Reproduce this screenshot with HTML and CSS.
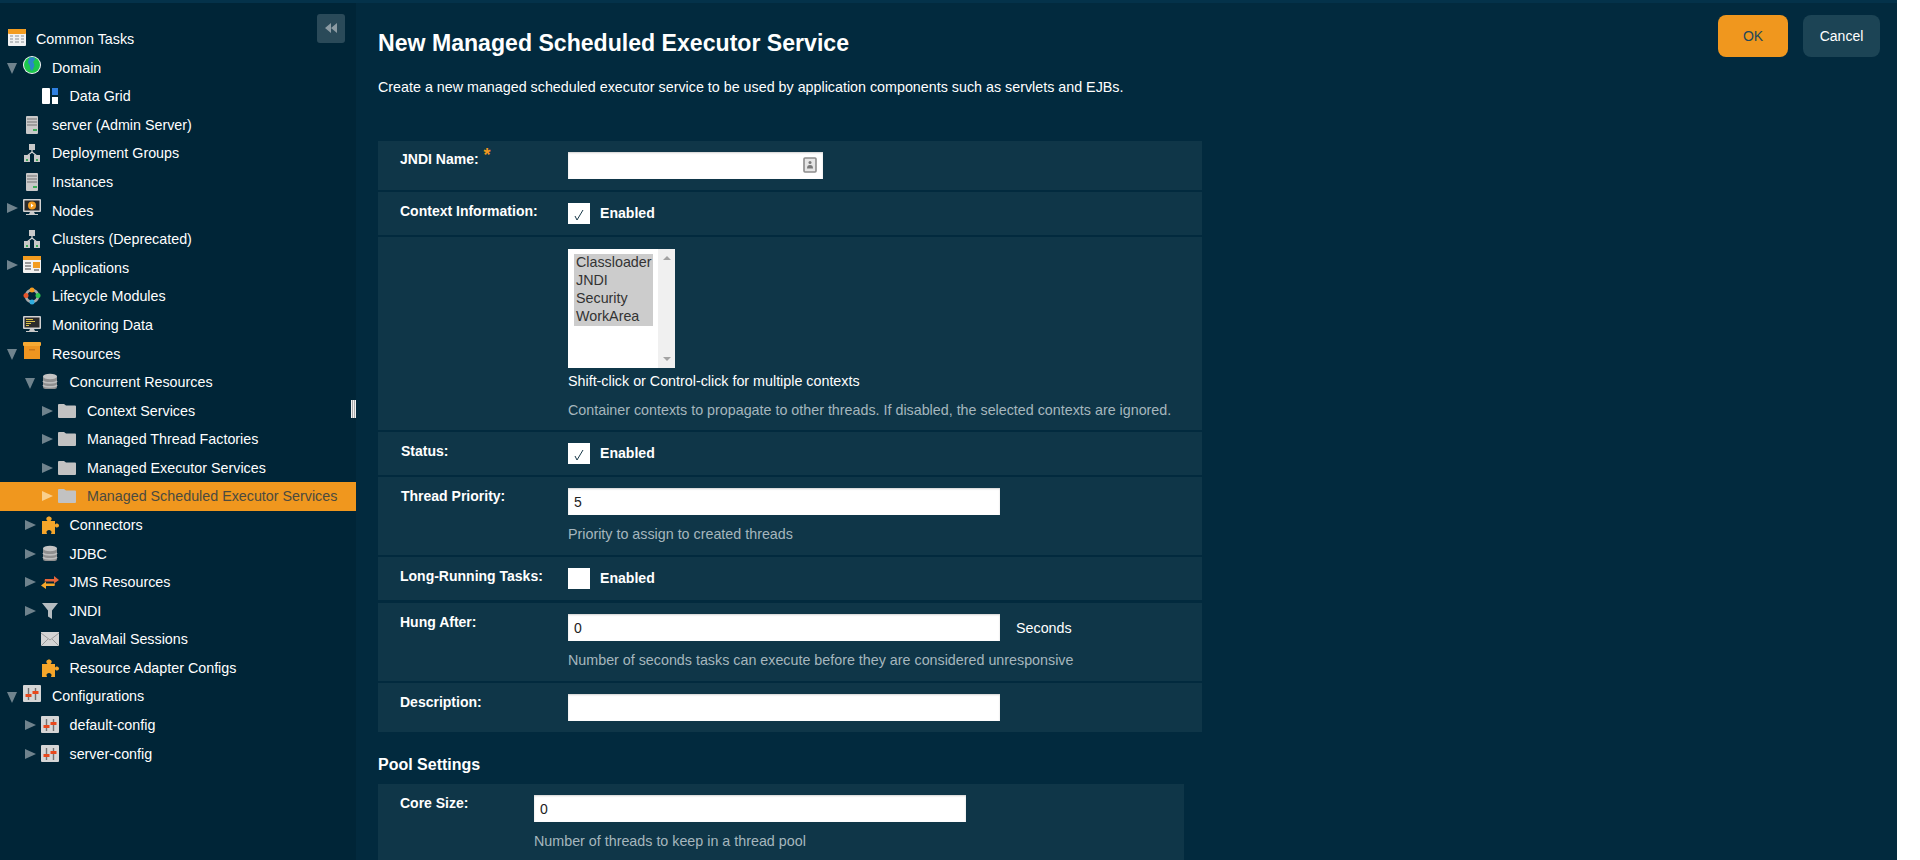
FILE: index.html
```html
<!DOCTYPE html>
<html>

<head>
    <title>New Managed Scheduled Executor Service</title>
    <meta charset="utf-8">
    <meta name="viewport" content="width=device-width, initial-scale=1.0">
    <link rel="stylesheet" href="styles.css">
</head>

<body>

    <svg class="defs" width="0" height="0">
        <symbol id="i-tasks" viewBox="0 0 18 18">
            <rect y="1" width="18" height="17" rx="1" fill="#f2f2f2"/>
            <rect y="1" width="18" height="5" rx="1" fill="#f39c1f"/>
            <path d="M2 8h3M7 8h4M13 8h3M2 11h3M7 11h4M13 11h3M2 14h3M7 14h4M13 14h3" stroke="#8a8f93" stroke-width="1.2"/>
        </symbol>
        <symbol id="i-globe" viewBox="0 0 18 18">
            <circle cx="9" cy="9" r="9" fill="#f3f7f7"/>
            <circle cx="9" cy="9" r="8" fill="#1cc64c"/>
            <path d="M6 2c2-1 4-1 6 0 0 2-1 3-2 4 1 2 2 3 1 5-1 1-1 3-2 4-1-1-2-2-2-4 0-2-1-3-2-4 0-2 1-3 1-5z" fill="#2a86c8"/>
        </symbol>
        <symbol id="i-grid" viewBox="0 0 18 18">
            <rect x="1" y="1" width="8" height="16" rx="1" fill="#fff"/>
            <rect x="11" y="1" width="6" height="7" fill="#2f7fe0"/>
            <rect x="11" y="10" width="6" height="7" fill="#fff"/>
        </symbol>
        <symbol id="i-server" viewBox="0 0 18 18">
            <rect x="3" y="0" width="12" height="18" rx="1" fill="#c9c9c9"/>
            <path d="M4 3h10M4 6h10M4 9h10" stroke="#8f8f8f" stroke-width="1.4"/>
            <rect x="10" y="13" width="4" height="2" fill="#3fae5a"/>
        </symbol>
        <symbol id="i-cluster" viewBox="0 0 18 18">
            <rect x="6" y="0" width="6" height="6" fill="#c9c9c9"/>
            <path d="M9 6v3M4 12L9 8l5 4" stroke="#d5d5d5" stroke-width="1.2" fill="none"/>
            <rect x="1" y="11" width="6" height="7" fill="#c9c9c9"/>
            <rect x="11" y="11" width="6" height="7" fill="#c9c9c9"/>
            <rect x="3" y="15" width="2" height="2" fill="#3fae5a"/>
            <rect x="13" y="15" width="2" height="2" fill="#3fae5a"/>
        </symbol>
        <symbol id="i-nodes" viewBox="0 0 18 18">
            <rect x="0" y="0" width="18" height="13" rx="1" fill="#d2d2d2"/>
            <rect x="1.5" y="1.5" width="15" height="10" fill="#2b2b2b"/>
            <circle cx="9" cy="6.5" r="4" fill="#f39c1f"/>
            <path d="M8 4.5l2.5 2-2.5 2z" fill="#fff"/>
            <path d="M7 13h4l1 2h3v1H3v-1h3z" fill="#c9c9c9"/>
        </symbol>
        <symbol id="i-apps" viewBox="0 0 18 18">
            <rect width="18" height="17" rx="1" fill="#f2f2f2"/>
            <rect width="18" height="4" fill="#f39c1f"/>
            <rect x="10" y="6" width="7" height="6" fill="#f39c1f"/>
            <path d="M2 7h6M2 10h6M2 13h6M11 14h5" stroke="#7d7d7d" stroke-width="1.6"/>
        </symbol>
        <symbol id="i-life" viewBox="0 0 18 18">
            <circle cx="9" cy="9" r="6" fill="none" stroke="#a9a9a9" stroke-width="2.5"/>
            <circle cx="9" cy="3" r="2.5" fill="#f39c1f"/>
            <circle cx="15" cy="8.500" r="2.500" fill="#2fc44f"/>
            <circle cx="9" cy="15" r="2.500" fill="#2faee0"/>
            <circle cx="3" cy="8.500" r="2.500" fill="#e8552a"/>
        </symbol>
        <symbol id="i-monitor" viewBox="0 0 18 18">
            <rect width="18" height="13" rx="1" fill="#d2d2d2"/>
            <rect x="1.5" y="1.5" width="15" height="10" fill="#2b2b2b"/>
            <path d="M3 3.5h7M3 5.5h9M3 7.5h5M3 9.5h3" stroke="#d8c24a" stroke-width="1"/>
            <path d="M7 13h4l1 2h3v1H3v-1h3z" fill="#c9c9c9"/>
        </symbol>
        <symbol id="i-box" viewBox="0 0 18 18">
            <rect x="0" y="0" width="18" height="4" rx="1" fill="#f7a933"/>
            <rect x="1" y="4" width="16" height="13" fill="#ef9520"/>
            <rect x="6" y="7" width="6" height="1.5" fill="#c9771a"/>
        </symbol>
        <symbol id="i-db" viewBox="0 0 18 18">
            <rect x="2" y="2" width="14" height="14" rx="2.500" fill="#8f8f8f"/>
            <ellipse cx="9" cy="3.500" rx="7" ry="2.800" fill="#c4c4c4"/>
            <path d="M2 8c2 2.500 12 2.500 14 0M2 12c2 2.500 12 2.500 14 0" stroke="#bdbdbd" stroke-width="1.600" fill="none"/>
        </symbol>
        <symbol id="i-folder" viewBox="0 0 18 18">
            <path d="M0 3a1 1 0 0 1 1-1h5l2 1.500h9a1 1 0 0 1 1 1V15a1 1 0 0 1-1 1H1a1 1 0 0 1-1-1z" fill="#c2c2c2"/>
        </symbol>
        <symbol id="i-puzzle" viewBox="0 0 18 18">
            <path d="M1 5h5.500C5.500 4 5 3 5.500 2S7 .5 8 .5 10 1 10.500 2 10.500 4 9.500 5H14v3.500c.5-.5 1-1 2-1s2 1 2 2-1 2-2 2-1.500-.5-2-1V18H10c0-.5.500-1 .500-2s-1-2-2.500-2-2.500 1-2.500 2 .500 1.500.500 2H1z" fill="#f5a62a"/>
        </symbol>
        <symbol id="i-jms" viewBox="0 0 18 18">
            <path d="M4 6h9V3l5 4-5 3.500V8.500H3.500z" fill="#e8663a"/>
            <path d="M14 10.500H5V8.500L0 12.500 5 16v-3h8.500z" fill="#f5a62a"/>
        </symbol>
        <symbol id="i-filter" viewBox="0 0 18 18">
            <path d="M1 1h16l-6 7.500V17l-4-2.500V8.500z" fill="#b5bcc0"/>
        </symbol>
        <symbol id="i-mail" viewBox="0 0 18 18">
            <rect y="2" width="18" height="14" fill="#d5d5d5"/>
            <path d="M0 3l9 7 9-7M0 16l7-7M18 16l-7-7" stroke="#9c9c9c" stroke-width="1" fill="none"/>
        </symbol>
        <symbol id="i-config" viewBox="0 0 18 18">
            <rect width="18" height="17" rx="1" fill="#d6d6d6"/>
            <path d="M5.500 3v12M12.500 3v12" stroke="#707070" stroke-width="1.400"/>
            <rect x="2.500" y="9" width="6" height="3" fill="#e8481c"/>
            <rect x="9.500" y="6" width="6" height="3" fill="#e8481c"/>
        </symbol>
    </svg>

    <div class="app">

        <nav class="sidebar">
            <button class="collapse">
                <svg width="12" height="10" viewBox="0 0 12 10"><path d="M6 0v10L0 5zM12 0v10L6 5z" fill="#8c9ba3"/></svg>
            </button>
            <div class="thumb"></div>

            <div class="node top raised">
                <svg class="ico"><use href="#i-tasks"/></svg><span>Common Tasks</span>
            </div>
            <div class="node l0 raised"><i class="arrow down"></i><svg class="ico"><use href="#i-globe"/></svg><span>Domain</span></div>
            <div class="node l1"><i class="arrow none"></i><svg class="ico"><use href="#i-grid"/></svg><span>Data Grid</span></div>
            <div class="node l0"><i class="arrow none"></i><svg class="ico"><use href="#i-server"/></svg><span>server (Admin Server)</span></div>
            <div class="node l0"><i class="arrow none"></i><svg class="ico"><use href="#i-cluster"/></svg><span>Deployment Groups</span></div>
            <div class="node l0"><i class="arrow none"></i><svg class="ico"><use href="#i-server"/></svg><span>Instances</span></div>
            <div class="node l0 raised"><i class="arrow"></i><svg class="ico"><use href="#i-nodes"/></svg><span>Nodes</span></div>
            <div class="node l0"><i class="arrow none"></i><svg class="ico"><use href="#i-cluster"/></svg><span>Clusters (Deprecated)</span></div>
            <div class="node l0 raised"><i class="arrow"></i><svg class="ico"><use href="#i-apps"/></svg><span>Applications</span></div>
            <div class="node l0"><i class="arrow none"></i><svg class="ico"><use href="#i-life"/></svg><span>Lifecycle Modules</span></div>
            <div class="node l0"><i class="arrow none"></i><svg class="ico"><use href="#i-monitor"/></svg><span>Monitoring Data</span></div>
            <div class="node l0 raised"><i class="arrow down"></i><svg class="ico"><use href="#i-box"/></svg><span>Resources</span></div>
            <div class="node l1"><i class="arrow down"></i><svg class="ico"><use href="#i-db"/></svg><span>Concurrent Resources</span></div>
            <div class="node l2"><i class="arrow"></i><svg class="ico"><use href="#i-folder"/></svg><span>Context Services</span></div>
            <div class="node l2"><i class="arrow"></i><svg class="ico"><use href="#i-folder"/></svg><span>Managed Thread Factories</span></div>
            <div class="node l2"><i class="arrow"></i><svg class="ico"><use href="#i-folder"/></svg><span>Managed Executor Services</span></div>
            <div class="node l2 selected"><i class="arrow"></i><svg class="ico"><use href="#i-folder"/></svg><span>Managed Scheduled Executor Services</span></div>
            <div class="node l1"><i class="arrow"></i><svg class="ico"><use href="#i-puzzle"/></svg><span>Connectors</span></div>
            <div class="node l1"><i class="arrow"></i><svg class="ico"><use href="#i-db"/></svg><span>JDBC</span></div>
            <div class="node l1"><i class="arrow"></i><svg class="ico"><use href="#i-jms"/></svg><span>JMS Resources</span></div>
            <div class="node l1"><i class="arrow"></i><svg class="ico"><use href="#i-filter"/></svg><span>JNDI</span></div>
            <div class="node l1"><i class="arrow none"></i><svg class="ico"><use href="#i-mail"/></svg><span>JavaMail Sessions</span></div>
            <div class="node l1"><i class="arrow none"></i><svg class="ico"><use href="#i-puzzle"/></svg><span>Resource Adapter Configs</span></div>
            <div class="node l0 raised"><i class="arrow down"></i><svg class="ico"><use href="#i-config"/></svg><span>Configurations</span></div>
            <div class="node l1"><i class="arrow"></i><svg class="ico"><use href="#i-config"/></svg><span>default-config</span></div>
            <div class="node l1"><i class="arrow"></i><svg class="ico"><use href="#i-config"/></svg><span>server-config</span></div>
        </nav>

        <main class="content">
            <div class="page-head">
                <div>
                    <h1>New Managed Scheduled Executor Service</h1>
                    <p class="intro">Create a new managed scheduled executor service to be used by application components such as servlets and EJBs.</p>
                </div>
                <div class="buttons">
                    <button class="btn ok">OK</button>
                    <button class="btn cancel">Cancel</button>
                </div>
            </div>

            <section class="form">
                <div class="row r-jndi first">
                    <label>JNDI Name:<b class="req">*</b></label>
                    <div class="field">
                        <div class="with-icon">
                            <input type="text" class="short">
                            <svg class="card" width="14" height="16" viewBox="0 0 14 16">
                                <rect x="1" y="1" width="12" height="14" rx="1" fill="#e6e6e6" stroke="#8c8c8c" stroke-width="1.600"/>
                                <circle cx="7" cy="5.500" r="1.500" fill="#7a7a7a"/>
                                <path d="M4 11.500c0-2.500 1-3.500 3-3.500s3 1 3 3.500z" fill="#7a7a7a"/>
                            </svg>
                        </div>
                    </div>
                </div>

                <div class="row r-check">
                    <label>Context Information:</label>
                    <div class="field check-line">
                        <span class="check"><svg width="10" height="12" viewBox="0 0 10 12"><path d="M1 7l2 4L9 1" fill="none" stroke="#1a3a4a" stroke-width="1"/></svg></span>
                        <strong>Enabled</strong>
                    </div>
                </div>

                <div class="row r-contexts">
                    <label></label>
                    <div class="field">
                        <div class="listbox">
                            <div class="options">
                                <div>Classloader</div>
                                <div>JNDI</div>
                                <div>Security</div>
                                <div>WorkArea</div>
                            </div>
                            <div class="scroll">
                                <i class="up"></i>
                                <i class="dn"></i>
                            </div>
                        </div>
                        <p class="note">Shift-click or Control-click for multiple contexts</p>
                        <p class="hint">Container contexts to propagate to other threads. If disabled, the selected contexts are ignored.</p>
                    </div>
                </div>

                <div class="row r-check">
                    <label class="nudge">Status:</label>
                    <div class="field check-line">
                        <span class="check"><svg width="10" height="12" viewBox="0 0 10 12"><path d="M1 7l2 4L9 1" fill="none" stroke="#1a3a4a" stroke-width="1"/></svg></span>
                        <strong>Enabled</strong>
                    </div>
                </div>

                <div class="row r-input">
                    <label class="nudge">Thread Priority:</label>
                    <div class="field">
                        <input type="text" value="5">
                        <p class="hint">Priority to assign to created threads</p>
                    </div>
                </div>

                <div class="row r-check r-long">
                    <label>Long-Running Tasks:</label>
                    <div class="field check-line">
                        <span class="check"></span>
                        <strong>Enabled</strong>
                    </div>
                </div>

                <div class="row r-input">
                    <label>Hung After:</label>
                    <div class="field">
                        <div class="unit-line">
                            <input type="text" value="0">
                            <span>Seconds</span>
                        </div>
                        <p class="hint">Number of seconds tasks can execute before they are considered unresponsive</p>
                    </div>
                </div>

                <div class="row r-jndi">
                    <label>Description:</label>
                    <div class="field"><input type="text"></div>
                </div>
            </section>

            <h2>Pool Settings</h2>

            <section class="form pool">
                <div class="row r-input">
                    <label>Core Size:</label>
                    <div class="field">
                        <input type="text" value="0">
                        <p class="hint">Number of threads to keep in a thread pool</p>
                    </div>
                </div>
            </section>
        </main>

    </div>

</body>

</html>
```

FILE: styles.css
```css
html, body {
    margin: 0;
    height: 860px;
    overflow: hidden;
    background-color: #ffffff;
    font-family: "Liberation Sans", Arial, sans-serif;
    font-size: 14.3px;
    color: #ffffff;
}

.defs {
    position: absolute;
}

.app {
    display: flex;
    width: 1897px;
    height: 860px;
    overflow: hidden;
    background-color: #022a3e;
    border-top: 3px solid #04324a;
    box-sizing: border-box;
}

/* tree */

.sidebar {
    position: relative;
    flex: none;
    width: 356px;
    height: 860px;
    padding-top: 21.9px;
    box-sizing: border-box;
    background-color: #002537;
}

.collapse {
    position: absolute;
    top: 11px;
    left: 317px;
    width: 28px;
    height: 29px;
    padding: 0;
    border: none;
    border-radius: 3px;
    background-color: #2a4a59;
}

.thumb {
    position: absolute;
    top: 397px;
    right: 0;
    width: 5px;
    height: 18px;
    background: repeating-linear-gradient(90deg, #f2f2f2 0, #f2f2f2 1px, #a8a8a8 1px, #a8a8a8 2px);
}

.node {
    display: flex;
    align-items: center;
    height: 28.58px;
    white-space: nowrap;
}

.top {
    padding-left: 8px;
}

.top .ico {
    width: 18px;
    margin-right: 10px;
}

.l0 {
    padding-left: 7px;
}

.l1 {
    padding-left: 24.5px;
}

.l2 {
    padding-left: 42px;
}

.arrow {
    flex: none;
    width: 0;
    height: 0;
    margin: 0 5px 0 0;
    border-style: solid;
    border-width: 5px 0 5px 11px;
    border-color: transparent transparent transparent #6f838d;
}

.arrow.down {
    border-width: 11px 5px 0 5px;
    border-color: #6f838d transparent transparent transparent;
    margin: 2px 6px 0 0;
}

.arrow.none {
    border: none;
    width: 16px;
    margin: 0;
}

.ico {
    flex: none;
    width: 18px;
    height: 18px;
    margin: 0 11px 0 0;
}

.raised .ico {
    margin-bottom: 5px;
}

.raised .arrow {
    margin-bottom: 5px;
}

.raised .arrow.down {
    margin-bottom: 0;
}

.selected {
    background-color: #f0971e;
    color: #4b4a3f;
}

.selected .arrow {
    border-left-color: #f9cf8d;
}

/* content */

.content {
    flex: 1;
    padding-left: 22px;
}

.page-head {
    display: flex;
    justify-content: space-between;
    height: 138px;
}

h1 {
    margin: 27px 0 0 0;
    font-size: 23.1px;
    line-height: 26px;
}

.intro {
    margin: 22px 0 0 0;
    line-height: 18px;
}

.buttons {
    display: flex;
    gap: 15px;
    margin: 12px 17px 0 0;
}

.btn {
    height: 42px;
    border: none;
    border-radius: 8px;
    font-family: inherit;
    font-size: 14px;
}

.ok {
    width: 70px;
    background-color: #f0971e;
    color: #24485a;
}

.cancel {
    width: 77px;
    background-color: #1c4455;
    color: #ffffff;
}

.form {
    display: flex;
    flex-direction: column;
    gap: 2px;
    width: 824px;
}

.row {
    display: flex;
    box-sizing: border-box;
    padding: 11px 0 0 22px;
    background-color: #0f3648;
}

.row label {
    flex: none;
    width: 168px;
    margin-top: -1px;
    font-size: 14px;
    font-weight: bold;
    line-height: 18px;
}

.row.first label {
    margin-top: -2px;
}

.row label.nudge {
    padding-left: 1px;
    width: 167px;
}

.req {
    color: #f0971e;
    font-size: 18px;
    line-height: 0;
    margin-left: 5px;
    vertical-align: 3px;
}

.r-jndi {
    height: 49px;
}

.r-check {
    height: 43px;
}

.r-long {
    margin-bottom: 1px;
}

.r-input {
    height: 78px;
}

.r-contexts {
    height: 193px;
}

input {
    display: block;
    width: 432px;
    height: 27px;
    padding: 0 6px;
    box-sizing: border-box;
    border: none;
    box-shadow: inset 0 1px 2px #d0d0d0;
    font-family: inherit;
    font-size: 14px;
    color: #222222;
    background-color: #ffffff;
}

input.short {
    width: 255px;
}

.with-icon {
    position: relative;
    width: 255px;
}

.card {
    position: absolute;
    top: 5px;
    right: 6px;
}

.check-line {
    display: flex;
    align-items: center;
    height: 21px;
}

.check {
    display: flex;
    align-items: center;
    justify-content: center;
    width: 22px;
    height: 21px;
    margin-right: 10px;
    background-color: #ffffff;
}

.check svg {
    margin-top: 3px;
}

.check-line strong {
    font-size: 14.1px;
    margin-bottom: 2px;
}

.unit-line {
    display: flex;
    align-items: center;
}

.unit-line span {
    margin-left: 16px;
}

.listbox {
    display: flex;
    width: 107px;
    height: 119px;
    margin-top: 1px;
    background-color: #ffffff;
}

.options {
    flex: 1;
    padding: 5px 5px 0 6px;
    color: #333333;
    line-height: 17px;
}

.options div {
    padding: 0 0 1px 2px;
    background-color: #cccccc;
}

.scroll {
    display: flex;
    flex-direction: column;
    justify-content: space-between;
    align-items: center;
    flex: none;
    width: 17px;
    padding: 7px 0 7px 0;
    box-sizing: border-box;
    background-color: #f0f0f0;
}

.up, .dn {
    width: 0;
    height: 0;
    border-style: solid;
    border-color: transparent;
}

.up {
    border-width: 0 4px 4px 4px;
    border-bottom-color: #a3a3a3;
}

.dn {
    border-width: 4px 4px 0 4px;
    border-top-color: #a3a3a3;
}

.note {
    margin: 4px 0 0 0;
    line-height: 18px;
}

.hint {
    margin: 10px 0 0 0;
    line-height: 18px;
    color: #a6b6be;
}

.note + .hint {
    margin-top: 11px;
}

h2 {
    margin: 24px 0 10px 0;
    font-size: 16px;
    line-height: 18px;
}

.pool {
    width: 806px;
}

.pool .row label {
    width: 134px;
}
```
